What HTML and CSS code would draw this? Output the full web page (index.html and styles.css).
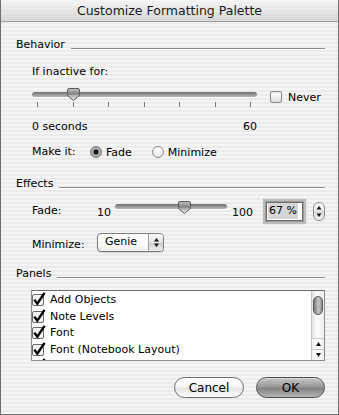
FILE: index.html
```html
<!DOCTYPE html>
<html lang="en">
<head>
<meta charset="utf-8">
<title>Customize Formatting Palette</title>
<link rel="stylesheet" href="styles.css">
</head>
<body>
<div class="window">
  <div class="titlebar">Customize Formatting Palette</div>
  <div class="content">
    <div class="group-head behavior-head"><span class="group-title">Behavior</span><span class="rule"></span></div>
    <div class="text-row inactive-label">If inactive for:</div>
    <div class="slider-row">
      <div class="slider slider-wide">
        <div class="track"></div>
        <svg class="thumb" style="left:35px" width="13" height="13" viewBox="0 0 13 13">
          <defs><linearGradient id="tg1" x1="0" y1="0" x2="0" y2="1"><stop offset="0" stop-color="#c4c4c4"/><stop offset="0.45" stop-color="#808080"/><stop offset="0.6" stop-color="#b4b4b4"/><stop offset="1" stop-color="#ececec"/></linearGradient></defs>
          <path d="M2 0.5 H11 Q12.5 0.5 12.5 2 V7.5 L6.5 12.5 L0.5 7.5 V2 Q0.5 0.5 2 0.5 Z" fill="url(#tg1)" stroke="#5c5c5c"/>
        </svg>
        <div class="ticks"><i></i><i></i><i></i><i></i><i></i><i></i><i></i></div>
      </div>
      <div class="never"><span class="checkbox"></span><span>Never</span></div>
    </div>
    <div class="range-labels"><span>0 seconds</span><span>60</span></div>
    <div class="radio-row">
      <span class="row-label make-label">Make it:</span>
      <span class="radio checked"></span><span class="radio-text fade-text">Fade</span>
      <span class="radio"></span><span class="radio-text">Minimize</span>
    </div>

    <div class="group-head effects-head"><span class="group-title">Effects</span><span class="rule"></span></div>
    <div class="fade-row">
      <span class="row-label fade-label">Fade:</span>
      <span class="min-val">10</span>
      <div class="slider slider-short">
        <div class="track"></div>
        <svg class="thumb" style="left:63px" width="13" height="13" viewBox="0 0 13 13">
          <defs><linearGradient id="tg2" x1="0" y1="0" x2="0" y2="1"><stop offset="0" stop-color="#c4c4c4"/><stop offset="0.45" stop-color="#808080"/><stop offset="0.6" stop-color="#b4b4b4"/><stop offset="1" stop-color="#ececec"/></linearGradient></defs>
          <path d="M2 0.5 H11 Q12.5 0.5 12.5 2 V7.5 L6.5 12.5 L0.5 7.5 V2 Q0.5 0.5 2 0.5 Z" fill="url(#tg2)" stroke="#5c5c5c"/>
        </svg>
      </div>
      <span class="max-val">100</span>
      <div class="field"><span class="sel">67 %</span></div>
      <div class="stepper">
        <svg width="12" height="19" viewBox="0 0 12 19">
          <path d="M6 4 L8.5 7.5 H3.5 Z" fill="#111"/>
          <path d="M6 15 L8.5 11.5 H3.5 Z" fill="#111"/>
        </svg>
      </div>
    </div>
    <div class="minimize-row">
      <span class="row-label min-label">Minimize:</span>
      <div class="popup">
        <span class="popup-text">Genie</span>
        <span class="popup-arrows">
          <svg width="9" height="13" viewBox="0 0 9 13">
            <path d="M4.5 2 L7 5.5 H2 Z" fill="#111"/>
            <path d="M4.5 11 L7 7.5 H2 Z" fill="#111"/>
          </svg>
        </span>
      </div>
    </div>

    <div class="group-head panels-head"><span class="group-title">Panels</span><span class="rule"></span></div>
    <div class="listbox">
      <div class="list-items">
        <div class="list-item"><svg class="cb" width="14" height="16" viewBox="0 0 14 16"><rect x="0.5" y="2.5" width="11" height="11" rx="1.5" fill="#f4f4f4" stroke="#6a6a6a"/><path d="M2.3 7.6 L5.3 11.6 L12.6 0.8" fill="none" stroke="#000" stroke-width="2.4"/></svg><span>Add Objects</span></div>
        <div class="list-item"><svg class="cb" width="14" height="16" viewBox="0 0 14 16"><rect x="0.5" y="2.5" width="11" height="11" rx="1.5" fill="#f4f4f4" stroke="#6a6a6a"/><path d="M2.3 7.6 L5.3 11.6 L12.6 0.8" fill="none" stroke="#000" stroke-width="2.4"/></svg><span>Note Levels</span></div>
        <div class="list-item"><svg class="cb" width="14" height="16" viewBox="0 0 14 16"><rect x="0.5" y="2.5" width="11" height="11" rx="1.5" fill="#f4f4f4" stroke="#6a6a6a"/><path d="M2.3 7.6 L5.3 11.6 L12.6 0.8" fill="none" stroke="#000" stroke-width="2.4"/></svg><span>Font</span></div>
        <div class="list-item"><svg class="cb" width="14" height="16" viewBox="0 0 14 16"><rect x="0.5" y="2.5" width="11" height="11" rx="1.5" fill="#f4f4f4" stroke="#6a6a6a"/><path d="M2.3 7.6 L5.3 11.6 L12.6 0.8" fill="none" stroke="#000" stroke-width="2.4"/></svg><span>Font (Notebook Layout)</span></div>
        <div class="list-item"><svg class="cb" width="14" height="16" viewBox="0 0 14 16"><rect x="0.5" y="2.5" width="11" height="11" rx="1.5" fill="#f4f4f4" stroke="#6a6a6a"/><path d="M2.3 7.6 L5.3 11.6 L12.6 0.8" fill="none" stroke="#000" stroke-width="2.4"/></svg></div>
      </div>
      <div class="scrollbar">
        <div class="sb-top"></div>
        <div class="sb-thumb"></div>
        <div class="sb-track"></div>
        <div class="sb-arrow">
          <svg width="11" height="10" viewBox="0 0 11 10"><path d="M5.5 3 L8 7 H3 Z" fill="#111"/></svg>
        </div>
        <div class="sb-arrow sb-down">
          <svg width="11" height="10" viewBox="0 0 11 10"><path d="M5.5 7 L8 3 H3 Z" fill="#111"/></svg>
        </div>
      </div>
    </div>

    <div class="buttons">
      <button class="btn cancel">Cancel</button>
      <button class="btn ok">OK</button>
    </div>
  </div>
</div>
</body>
</html>
```

FILE: styles.css
```css
html, body {
  margin: 0;
  padding: 0;
  background: #ffffff;
}

.window {
  width: 339px;
  height: 415px;
  box-sizing: border-box;
  border-left: 1px solid #6f6f6f;
  border-right: 1px solid #6f6f6f;
  border-bottom: 1px solid #6f6f6f;
  background: repeating-linear-gradient(180deg, #f5f5f5 0px, #f5f5f5 2px, #ebebeb 2px, #ebebeb 4px);
  font-family: "DejaVu Sans", "Liberation Sans", sans-serif;
  font-size: 11px;
  color: #000;
  display: flex;
  flex-direction: column;
  overflow: hidden;
}

.titlebar {
  height: 22px;
  box-sizing: border-box;
  border-bottom: 1px solid #9c9c9c;
  background:
    repeating-linear-gradient(180deg, rgba(255,255,255,0.25) 0px, rgba(255,255,255,0.25) 1px, rgba(0,0,0,0) 1px, rgba(0,0,0,0) 2px),
    linear-gradient(180deg, #f4f4f4 0%, #e2e2e2 50%, #d2d2d2 100%);
  text-align: center;
  font-size: 12.5px;
  line-height: 21px;
  color: #1a1a1a;
}

.content {
  display: flex;
  flex-direction: column;
  padding: 0 13px 0 15px;
}

.group-head {
  display: flex;
  height: 14px;
  line-height: 14px;
}
.group-title {
  margin-right: 6px;
}
.rule {
  flex: 1;
  height: 1px;
  margin-top: 10px;
  background: #8a8a8a;
  box-shadow: 0 1px 0 #ffffff;
}
.behavior-head { margin-top: 16px; }
.effects-head { margin-top: 18px; }
.panels-head { margin-top: 15px; }

.text-row {
  line-height: 14px;
  height: 14px;
  padding-left: 16px;
}
.inactive-label { margin-top: 13px; }

/* sliders */
.slider-row {
  display: flex;
  margin-top: 7px;
  height: 24px;
  padding-left: 16px;
}
.slider {
  position: relative;
}
.slider-wide {
  width: 225px;
  height: 24px;
}
.track {
  height: 5px;
  margin-top: 6px;
  border-radius: 3px;
  background: linear-gradient(180deg, #6c6c6c 0%, #8e8e8e 40%, #b8b8b8 100%);
  box-shadow: 0 1px 0 #ffffff;
}
.thumb {
  position: absolute;
  top: 2px;
  display: block;
}
.ticks {
  display: flex;
  justify-content: space-between;
  padding: 0 6px 0 5px;
  margin-top: 5px;
}
.ticks i {
  display: block;
  width: 1px;
  height: 5px;
  background: #777;
}

.never {
  display: flex;
  align-items: center;
  height: 12px;
  margin-top: 5px;
  margin-left: 13px;
}
.checkbox {
  display: inline-block;
  width: 10px;
  height: 10px;
  border: 1px solid #8c8c8c;
  border-radius: 2px;
  background: linear-gradient(180deg, #ffffff 0%, #f0f0f0 50%, #dcdcdc 100%);
  box-shadow: inset 0 1px 1px rgba(0,0,0,0.12);
  margin-right: 6px;
}

.range-labels {
  display: flex;
  justify-content: space-between;
  width: 225px;
  margin-left: 16px;
  margin-top: 10px;
  height: 14px;
  line-height: 14px;
}

.radio-row {
  display: flex;
  align-items: center;
  height: 14px;
  margin-top: 11px;
  padding-left: 16px;
}
.row-label {
  line-height: 14px;
}
.make-label {
  width: 58px;
}
.radio {
  display: inline-block;
  box-sizing: border-box;
  width: 12px;
  height: 12px;
  border-radius: 50%;
  border: 1px solid #8c8c8c;
  background: radial-gradient(circle at 50% 30%, #ffffff 0%, #f2f2f2 50%, #d4d4d4 100%);
  margin-right: 4px;
}
.radio.checked {
  background: radial-gradient(circle at 50% 50%, #1a1a1a 0px, #1a1a1a 2.2px, #9a9a9a 2.8px, #bdbdbd 5px, #d8d8d8 7px);
  border-color: #707070;
}
.fade-text {
  margin-right: 20px;
}

/* effects */
.fade-row {
  display: flex;
  align-items: center;
  height: 26px;
  margin-top: 7px;
  padding-left: 16px;
}
.fade-label {
  width: 65px;
}
.min-val {
  width: 18px;
  margin-top: 4px;
  line-height: 14px;
}
.slider-short {
  width: 112px;
  height: 14px;
  margin-top: -4px;
}
.slider-short .track {
  margin-top: 2px;
}
.slider-short .thumb {
  top: -1px;
}
.max-val {
  width: 39px;
  padding-left: 5px;
  box-sizing: border-box;
  margin-top: 4px;
  line-height: 14px;
}
.field {
  width: 37px;
  height: 19px;
  box-sizing: border-box;
  border: 1px solid #6a6a6a;
  background: #ffffff;
  box-shadow: 0 0 0 1px #9c9c9c, 0 0 1px 3px #bcbcbc;
  display: flex;
  align-items: center;
  padding-left: 1px;
}
.sel {
  background: #d6d6d6;
  line-height: 16px;
  padding: 0 1px;
}
.stepper {
  width: 12px;
  height: 19px;
  box-sizing: border-box;
  margin-left: 10px;
  border: 1px solid #8a8a8a;
  border-radius: 6px;
  background: linear-gradient(180deg, #ffffff 0%, #ececec 45%, #d8d8d8 50%, #f4f4f4 100%);
  display: flex;
  align-items: center;
  justify-content: center;
  overflow: hidden;
}
.stepper svg {
  display: block;
  flex: none;
}

.minimize-row {
  display: flex;
  align-items: center;
  height: 19px;
  margin-top: 9px;
  padding-left: 16px;
}
.min-label {
  width: 65px;
  margin-top: 4px;
}
.popup {
  width: 67px;
  height: 19px;
  box-sizing: border-box;
  border: 1px solid #7c7c7c;
  border-radius: 4px;
  background: linear-gradient(180deg, #ffffff 0%, #fafafa 60%, #ececec 100%);
  display: flex;
  overflow: hidden;
  box-shadow: 0 1px 1px rgba(0,0,0,0.15);
}
.popup-text {
  flex: 1;
  padding-left: 7px;
  line-height: 16px;
}
.popup-arrows {
  width: 14px;
  border-left: 1px solid #a0a0a0;
  background: linear-gradient(180deg, #f8f8f8 0%, #e4e4e4 50%, #cccccc 51%, #ececec 100%);
  display: flex;
  align-items: center;
  justify-content: center;
}
.popup-arrows svg { display: block; }

/* list */
.listbox {
  margin-top: 9px;
  margin-left: 15px;
  height: 71px;
  box-sizing: border-box;
  border: 1px solid #8c8c8c;
  border-top-color: #6c6c6c;
  background: #ffffff;
  display: flex;
  overflow: hidden;
}
.list-items {
  flex: 1;
  padding-top: 1px;
  overflow: hidden;
}
.list-item {
  display: flex;
  align-items: center;
  height: 16.5px;
  line-height: 16.5px;
  white-space: nowrap;
}
.cb {
  display: block;
  flex: none;
  margin-right: 4px;
}
.scrollbar {
  width: 12px;
  border-left: 1px solid #c4c4c4;
  background: linear-gradient(90deg, #e4e4e4 0%, #fafafa 40%, #f0f0f0 100%);
  display: flex;
  flex-direction: column;
}
.sb-top {
  height: 5px;
}
.sb-thumb {
  height: 17px;
  margin: 0 1px;
  border-radius: 5px;
  border: 1px solid #5a5a5a;
  background: linear-gradient(90deg, #7a7a7a 0%, #b0b0b0 40%, #c8c8c8 55%, #8c8c8c 100%);
}
.sb-track {
  flex: 1;
  border-bottom: 1px solid #d0d0d0;
}
.sb-arrow {
  height: 10px;
  display: flex;
  align-items: center;
  justify-content: center;
  background: linear-gradient(90deg, #f2f2f2, #ffffff 50%, #ececec);
}
.sb-down {
  border-top: 1px solid #cccccc;
}
.sb-arrow svg { display: block; }

/* buttons */
.buttons {
  display: flex;
  justify-content: flex-end;
  gap: 12px;
  margin-top: 16px;
}
.btn {
  height: 21px;
  box-sizing: border-box;
  border-radius: 11px;
  font-family: "DejaVu Sans", "Liberation Sans", sans-serif;
  font-size: 12px;
  color: #000;
  padding: 0;
  line-height: 18px;
}
.cancel {
  width: 70px;
  border: 1px solid #6c6c6c;
  background: linear-gradient(180deg, #ffffff 0%, #f6f6f6 45%, #e6e6e6 55%, #fafafa 100%);
}
.ok {
  width: 69px;
  border: 1px solid #4a4a4a;
  background: linear-gradient(180deg, #c6c6c6 0%, #9a9a9a 45%, #828282 55%, #b6b6b6 100%);
  box-shadow: inset 0 1px 1px rgba(255,255,255,0.4);
}
```
